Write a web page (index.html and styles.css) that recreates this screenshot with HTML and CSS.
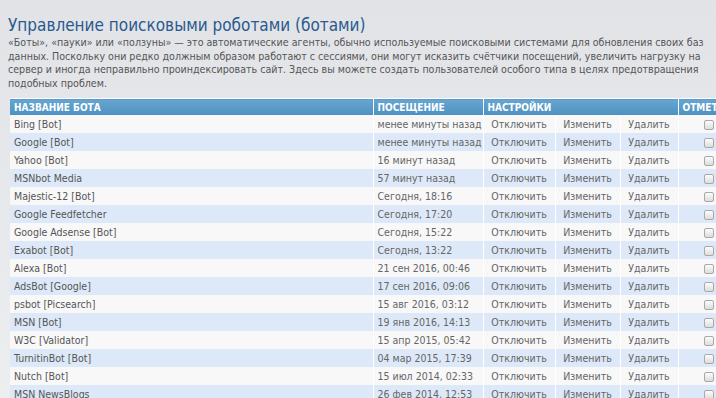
FILE: index.html
```html
<!DOCTYPE html>
<html lang="ru">
<head>
    <meta charset="UTF-8">
    <title>Управление поисковыми роботами (ботами)</title>
    <link rel="stylesheet" href="styles.css">
</head>
<body>
    <div class="page">
        <h1>Управление поисковыми роботами (ботами)</h1>
        <p class="intro">«Боты», «пауки» или «ползуны» — это автоматические агенты, обычно используемые поисковыми системами для обновления своих баз данных. Поскольку они редко должным образом работают с сессиями, они могут исказить счётчики посещений, увеличить нагрузку на сервер и иногда неправильно проиндексировать сайт. Здесь вы можете создать пользователей особого типа в целях предотвращения подобных проблем.</p>

        <table class="bots">
            <colgroup>
                <col class="c-name">
                <col class="c-visit">
                <col class="c-off">
                <col class="c-edit">
                <col class="c-del">
                <col class="c-mark">
            </colgroup>
            <thead>
                <tr>
                    <th>Название бота</th>
                    <th>Посещение</th>
                    <th colspan="3">Настройки</th>
                    <th>Отметить</th>
                </tr>
            </thead>
            <tbody>
                <tr><td>Bing [Bot]</td><td>менее минуты назад</td><td>Отключить</td><td>Изменить</td><td>Удалить</td><td class="mark"><input type="checkbox"></td></tr>
                <tr><td>Google [Bot]</td><td>менее минуты назад</td><td>Отключить</td><td>Изменить</td><td>Удалить</td><td class="mark"><input type="checkbox"></td></tr>
                <tr><td>Yahoo [Bot]</td><td>16 минут назад</td><td>Отключить</td><td>Изменить</td><td>Удалить</td><td class="mark"><input type="checkbox"></td></tr>
                <tr><td>MSNbot Media</td><td>57 минут назад</td><td>Отключить</td><td>Изменить</td><td>Удалить</td><td class="mark"><input type="checkbox"></td></tr>
                <tr><td>Majestic-12 [Bot]</td><td>Сегодня, 18:16</td><td>Отключить</td><td>Изменить</td><td>Удалить</td><td class="mark"><input type="checkbox"></td></tr>
                <tr><td>Google Feedfetcher</td><td>Сегодня, 17:20</td><td>Отключить</td><td>Изменить</td><td>Удалить</td><td class="mark"><input type="checkbox"></td></tr>
                <tr><td>Google Adsense [Bot]</td><td>Сегодня, 15:22</td><td>Отключить</td><td>Изменить</td><td>Удалить</td><td class="mark"><input type="checkbox"></td></tr>
                <tr><td>Exabot [Bot]</td><td>Сегодня, 13:22</td><td>Отключить</td><td>Изменить</td><td>Удалить</td><td class="mark"><input type="checkbox"></td></tr>
                <tr><td>Alexa [Bot]</td><td>21 сен 2016, 00:46</td><td>Отключить</td><td>Изменить</td><td>Удалить</td><td class="mark"><input type="checkbox"></td></tr>
                <tr><td>AdsBot [Google]</td><td>17 сен 2016, 09:06</td><td>Отключить</td><td>Изменить</td><td>Удалить</td><td class="mark"><input type="checkbox"></td></tr>
                <tr><td>psbot [Picsearch]</td><td>15 авг 2016, 03:12</td><td>Отключить</td><td>Изменить</td><td>Удалить</td><td class="mark"><input type="checkbox"></td></tr>
                <tr><td>MSN [Bot]</td><td>19 янв 2016, 14:13</td><td>Отключить</td><td>Изменить</td><td>Удалить</td><td class="mark"><input type="checkbox"></td></tr>
                <tr><td>W3C [Validator]</td><td>15 апр 2015, 05:42</td><td>Отключить</td><td>Изменить</td><td>Удалить</td><td class="mark"><input type="checkbox"></td></tr>
                <tr><td>TurnitinBot [Bot]</td><td>04 мар 2015, 17:39</td><td>Отключить</td><td>Изменить</td><td>Удалить</td><td class="mark"><input type="checkbox"></td></tr>
                <tr><td>Nutch [Bot]</td><td>15 июл 2014, 02:33</td><td>Отключить</td><td>Изменить</td><td>Удалить</td><td class="mark"><input type="checkbox"></td></tr>
                <tr><td>MSN NewsBlogs</td><td>26 фев 2014, 12:53</td><td>Отключить</td><td>Изменить</td><td>Удалить</td><td class="mark"><input type="checkbox"></td></tr>
            </tbody>
        </table>
    </div>
</body>
</html>
```

FILE: styles.css
```css
body {
    margin: 0;
    padding: 0;
    background: linear-gradient(to bottom, #e1e3e7, #eceef0);
    font-family: "DejaVu Sans Condensed", "DejaVu Sans", Verdana, sans-serif;
    font-stretch: condensed;
    overflow: hidden;
}

.page {
    width: 740px;
    padding: 14px 0 0 8px;
}

h1 {
    margin: 0;
    font-size: 17px;
    font-weight: normal;
    color: #2a5a8e;
    line-height: 22px;
}

.intro {
    margin: 0 0 8px 0;
    font-size: 10.6px;
    line-height: 13.5px;
    color: #555;
    width: 728px;
}

.bots {
    margin-left: 2px;
    width: 740px;
    border-collapse: collapse;
    table-layout: fixed;
    font-size: 10.5px;
    color: #555;
    border-top: 1px solid #fff;
}

.c-name { width: 363px; }
.c-visit { width: 110px; }
.c-off { width: 72px; }
.c-edit { width: 65px; }
.c-del { width: 58px; }

.bots th {
    height: 16px;
    padding: 0 4px;
    text-align: left;
    font-size: 10px;
    font-weight: bold;
    text-transform: uppercase;
    color: #fff;
    background: linear-gradient(to bottom, #68a6d1, #4d90c1);
    border-left: 1px solid #fff;
    white-space: nowrap;
    overflow: hidden;
}

.bots th:first-child {
    border-left: none;
}

.bots td {
    height: 18px;
    padding: 0 4px;
    white-space: nowrap;
    overflow: hidden;
    border-left: 1px solid #fff;
    background: #f8f8f8;
    color: #666;
}

.bots td:first-child {
    border-left: none;
    color: #555;
}

.bots td:nth-child(3),
.bots td:nth-child(4),
.bots td:nth-child(5) {
    text-align: center;
}

.bots tbody tr:nth-child(even) td {
    background: #dde9f8;
}

.bots td.mark {
    padding-left: 25px;
}

/* gray rounded checkbox like the original theme */
.mark input {
    appearance: none;
    -webkit-appearance: none;
    margin: 0;
    width: 10px;
    height: 10px;
    border: 1px solid #a9a9a9;
    border-radius: 2px;
    background: linear-gradient(to bottom, #fdfdfd, #dcdcdc);
    vertical-align: middle;
}
```
